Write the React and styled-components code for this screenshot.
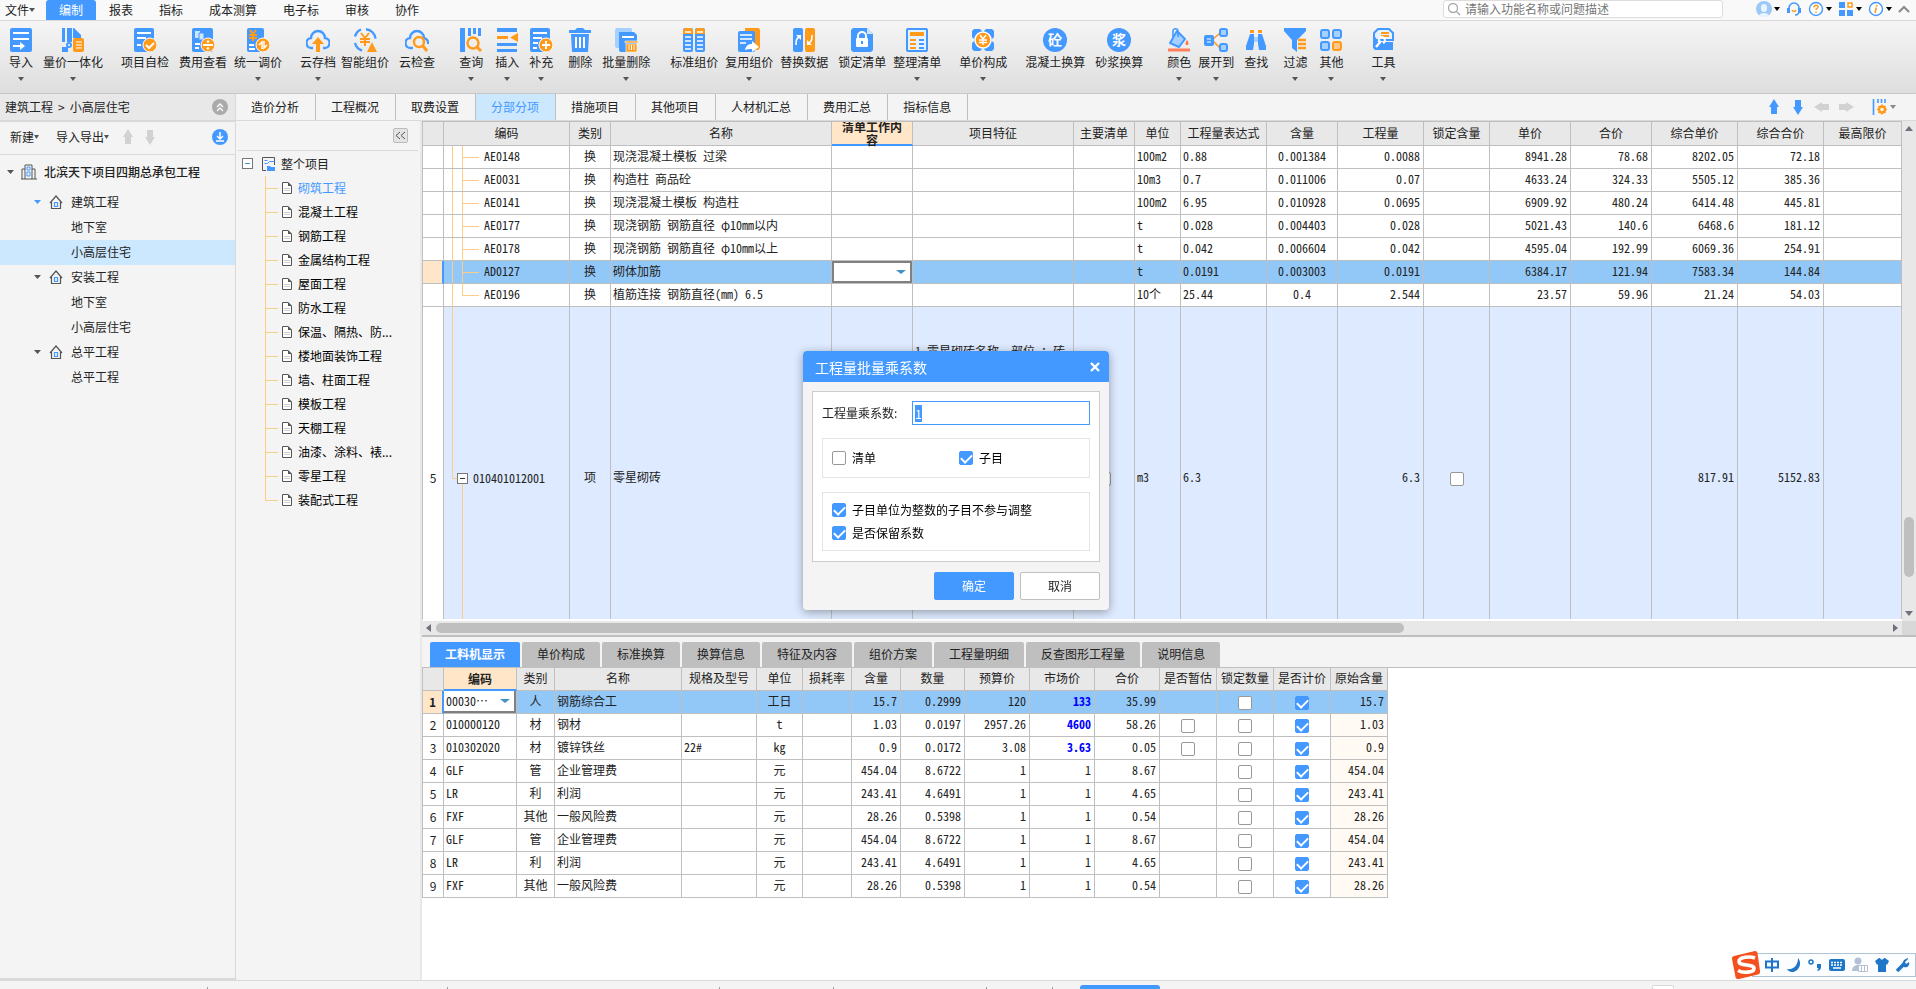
import React, { useEffect, useRef, useState } from "react";
import styled, { createGlobalStyle, css } from "styled-components";

const COLORS = {
  blue: "#4399ff",
  orange: "#ff9a1a",
  grid: "#bfbfbf",
  line: "#d9d9d9",
  panel: "#f4f4f4",
  header: "#e8e8e8",
  selected: "#cce8ff",
  rowSelected: "#92c8f8",
  rowBill: "#ddeaff",
  peach: "#ffe6c8",
  branch: "#ffcc88",
  text: "#222222",
};

const B = COLORS.blue;
const O = COLORS.orange;

/* ---------- toolbar icons, all on a 24 x 24 grid ---------- */

const ICONS = {
  import: (
    <>
      <rect x="1" width="22" height="24" rx="2" fill={B} />
      <path d="M4 5h16M4 11h16" stroke="#fff" strokeWidth="2" />
      <path d="M4 17h7v-3l5 4-5 4v-3H4z" fill="#fff" />
    </>
  ),
  quantity: (
    <>
      <path d="M1 0h3v14H1zM6 0h5v14H6zM1 19h6v5H1z" fill={B} />
      <path d="M12 0h1l7 7v3h-8z" fill={B} />
      <circle cx="8" cy="17" r="2" fill="#fff" stroke={B} strokeWidth="2" />
      <rect x="12" y="10" width="11" height="14" rx="2" fill={O} />
      <path d="M15 14h6M15 17h6M15 20h6" stroke="#fff" strokeWidth="1" />
    </>
  ),
  check: (
    <>
      <rect x="1" width="20" height="24" rx="2" fill={B} />
      <path d="M4 5h14M4 10h9M4 17h4" stroke="#fff" strokeWidth="2" />
      <circle cx="17" cy="17" r="7" fill={O} stroke="#fff" />
      <path d="M13 17l3 3 5-5" stroke="#fff" strokeWidth="2" fill="none" />
    </>
  ),
  fee: (
    <>
      <rect x="1" width="21" height="24" rx="2" fill={B} />
      <path d="M4 3h5v7H4z" fill="#cfe6ff" />
      <path d="M8 5h5v7H8z" fill="#cfe6ff" stroke={B} />
      <path d="M4 16h5M4 20h4" stroke="#fff" strokeWidth="2" />
      <circle cx="17" cy="17" r="7" fill={O} stroke="#fff" />
      <path d="M12 17h10" stroke="#fff" strokeWidth="2" />
      <circle cx="17" cy="13.500" r="1.300" fill="#fff" />
      <circle cx="17" cy="20.500" r="1.300" fill="#fff" />
    </>
  ),
  adjust: (
    <>
      <rect x="1" width="17" height="24" rx="2" fill={B} />
      <path d="M4 2l3 4 3-4M3 7h8M3 10h8M7 6v7" stroke={O} strokeWidth="2" fill="none" />
      <path d="M3 17h5M3 21h6" stroke="#fff" strokeWidth="2" />
      <circle cx="17" cy="17" r="7" fill={O} stroke="#fff" />
      <path d="M13 17l3-3v7M21 17l-3 3v-7" stroke="#fff" fill="none" strokeWidth="1.5" />
    </>
  ),
  cloudUp: (
    <>
      <path d="M7 20H6a5 5 0 0 1-1-10 7 7 0 0 1 14 0 5 5 0 0 1-1 10h-1" fill="none" stroke={B} strokeWidth="2.4" />
      <path d="M12 9l6 7h-4v8h-4v-8H6z" fill={O} />
    </>
  ),
  smart: (
    <>
      <path d="M8 1.500a10.500 10.500 0 0 0-6 7M2 15a10.500 10.500 0 0 0 7 7.500M13 1.200a10.500 10.500 0 0 1 9.500 9.500" fill="none" stroke={B} strokeWidth="2.400" />
      <path d="M8 5l4 5 4-5M7 11h10M7 14h10M12 10v8" stroke={O} strokeWidth="2" fill="none" />
      <path d="M19 14l5 10H14z" fill={O} />
    </>
  ),
  cloudSearch: (
    <>
      <path d="M8 20H6a5 5 0 0 1-1-10 7 7 0 0 1 14 0 5 5 0 0 1 4 6" fill="none" stroke={B} strokeWidth="2.4" />
      <circle cx="14" cy="14" r="5" fill="none" stroke={O} strokeWidth="2.4" />
      <path d="M18 18l4 5" stroke={O} strokeWidth="3" />
    </>
  ),
  query: (
    <>
      <path d="M1 0h5v24H1zM9 0h3v8H9zM14 0h3v6h-3zM19 0h3v8h-3z" fill={B} />
      <circle cx="14" cy="15" r="5.500" fill="none" stroke={O} strokeWidth="2.400" />
      <path d="M18 19l4 4" stroke={O} strokeWidth="3" />
    </>
  ),
  insert: (
    <>
      <path d="M2 0h20v4H2zM2 15h20v3H2zM2 21h20v3H2z" fill={B} />
      <path d="M2 8h11v3H2z" fill={O} />
      <path d="M23 5v9l-8-4.500z" fill={O} />
    </>
  ),
  add: (
    <>
      <rect x="1" width="20" height="24" rx="2" fill={B} />
      <path d="M4 5h14M4 10h9M4 15h5M4 20h4" stroke="#fff" strokeWidth="2" />
      <circle cx="17" cy="17" r="7" fill={O} stroke="#fff" />
      <path d="M13 17h8M17 13v8" stroke="#fff" strokeWidth="2" />
    </>
  ),
  trash: (
    <>
      <path d="M1 2h6l2-2h6l2 2h6v3H1zM3 6h18l-1 18H4z" fill={B} />
      <path d="M8 9v11M12 9v11M16 9v11" stroke="#fff" strokeWidth="2" />
    </>
  ),
  batchTrash: (
    <>
      <rect x="1" width="17" height="20" rx="2" fill="#a6d0ff" />
      <path d="M5 4h15l3 3v17H7a2 2 0 0 1-2-2z" fill={B} />
      <path d="M8 9h12" stroke="#fff" strokeWidth="2" />
      <path d="M11 13h13v2H11zM12 16h11v8H12z" fill={O} stroke="#fff" strokeWidth="0.600" />
      <path d="M15 17v5M17.500 17v5M20 17v5" stroke="#fff" />
    </>
  ),
  standard: (
    <>
      <rect x="1" width="10" height="24" rx="2" fill={B} />
      <rect x="13" width="10" height="24" rx="2" fill={B} />
      <path d="M1 6V2l2-2h6l2 2v4zM13 6V2l2-2h6l2 2v4z" fill={O} />
      <path d="M3 4h6M15 4h6M3 9h6M15 9h6M3 13h6M15 13h6M3 17h6M15 17h6M3 21h6M15 21h6" stroke="#fff" strokeWidth="1.400" />
    </>
  ),
  reuse: (
    <>
      <path d="M8 0h14l1 2v18l-2 2H8z" fill={O} />
      <rect x="1" y="3" width="17" height="21" rx="2" fill={B} />
      <path d="M3 7h12M3 11h12M3 15h6" stroke="#fff" strokeWidth="1.600" />
      <path d="M8 22c1-5 4-6 7-6v-3l7 6-7 5v-3c-3 0-5 0-7 1z" fill="#fff" />
    </>
  ),
  replace: (
    <>
      <rect x="1" width="10" height="24" rx="2" fill={B} />
      <rect x="13" width="10" height="24" rx="2" fill={O} />
      <path d="M4 17c0-4 0-6 3-8" stroke="#fff" strokeWidth="1.600" fill="none" />
      <path d="M4 7h5v5z" fill="#fff" />
      <path d="M20 7c0 4 0 6-3 8" stroke="#fff" strokeWidth="1.600" fill="none" />
      <path d="M20 17h-5v-5z" fill="#fff" />
    </>
  ),
  lock: (
    <>
      <path d="M3 0h14l6 6v16l-2 2H3l-2-2V2z" fill={B} />
      <path d="M17 0v6h6z" fill="#cfe6ff" />
      <rect x="6" y="10" width="12" height="9" rx="1" fill="#fff" />
      <path d="M8 11V8a4 4 0 0 1 8 0v3" fill="none" stroke="#fff" strokeWidth="2" />
      <path d="M12 13v3" stroke={B} strokeWidth="2" />
    </>
  ),
  arrange: (
    <>
      <rect x="2" y="1" width="20" height="22" rx="1" fill="#e5f2ff" stroke={B} strokeWidth="2" />
      <path d="M5 6h14" stroke={O} strokeWidth="4" />
      <path d="M5 12h6M5 16h6M5 20h6" stroke={O} strokeWidth="2" />
      <path d="M14 12h5M14 16h5M14 20h5" stroke={B} strokeWidth="2" />
    </>
  ),
  price: (
    <>
      <path d="M3 1h6l3 3 3-3h6l2 2v6l-3 3 3 3v6l-2 2h-6l-3-3-3 3H3l-2-2v-6l3-3-3-3V3z" fill={B} />
      <circle cx="12" cy="12" r="8" fill={O} stroke="#fff" strokeWidth="1.500" />
      <path d="M9 7l3 4 3-4M8 12h8M8 14.500h8M12 11v6" stroke="#fff" strokeWidth="1.400" fill="none" />
    </>
  ),
  concrete: (
    <>
      <circle cx="12" cy="12" r="12" fill={B} />
      <text x="12" y="17" fontSize="14" fontWeight="700" fill="#fff" textAnchor="middle">砼</text>
    </>
  ),
  mortar: (
    <>
      <circle cx="12" cy="12" r="12" fill={B} />
      <text x="12" y="17" fontSize="14" fontWeight="700" fill="#fff" textAnchor="middle">浆</text>
    </>
  ),
  color: (
    <>
      <path d="M10 3l8 8-6 8-9-4z" fill="#a6d0ff" stroke={B} strokeWidth="2" strokeLinejoin="round" />
      <path d="M6 9V3c0-3 5-3 5 0v6" fill="none" stroke={B} strokeWidth="1.600" />
      <path d="M20 12c2 3 2 5 0 5s-2-2 0-5z" fill="#ff7350" />
      <path d="M1 22h22" stroke="#ff7e5c" strokeWidth="3" />
    </>
  ),
  expand: (
    <>
      <path d="M8 12l8-7M8 12l8 8" stroke={O} strokeWidth="1.500" />
      <rect x="0" y="7" width="10" height="11" rx="2" fill={B} />
      <path d="M3 11h4M3 14h4" stroke="#fff" />
      <rect x="16" y="1" width="7" height="7" rx="2" fill="#a6d0ff" stroke={B} strokeWidth="2" />
      <rect x="16" y="16" width="7" height="7" rx="2" fill="#a6d0ff" stroke={B} strokeWidth="2" />
    </>
  ),
  find: (
    <>
      <path d="M6 2h4v3H6zM14 2h4v3h-4z" fill={O} />
      <path d="M6 6h4v10l-1 6H2v-4zM14 6h4l4 12v4h-7l-1-6z" fill={B} />
      <path d="M10 9h4v5h-4z" fill="#a6d0ff" />
    </>
  ),
  filter: (
    <>
      <path d="M1 0h22v3l-9 9v12l-5-4v-8L1 3z" fill={B} />
      <path d="M15 12h8M15 16h8M15 20h8" stroke={O} strokeWidth="2.400" />
    </>
  ),
  other: (
    <>
      <rect x="2" y="2" width="8" height="8" rx="2" fill="#a6d0ff" stroke={B} strokeWidth="2" />
      <rect x="14" y="2" width="8" height="8" rx="2" fill="#a6d0ff" stroke={B} strokeWidth="2" />
      <rect x="2" y="14" width="8" height="8" rx="2" fill="#a6d0ff" stroke={B} strokeWidth="2" />
      <rect x="14" y="14" width="8" height="8" rx="2" fill="#ffc888" stroke={O} strokeWidth="2" />
    </>
  ),
  tool: (
    <>
      <path d="M7 1h11l4 4v7H3V5z" fill="#e5f2ff" stroke={B} strokeWidth="2" />
      <path d="M10 5h8M10 8h8" stroke={O} strokeWidth="2" />
      <path d="M2 5l5 9h15v8H4l-2-2z" fill={B} />
      <path d="M5 19l5-6" stroke="#fff" strokeWidth="2.400" />
      <path d="M8 13a3 3 0 1 1 4 2" fill="none" stroke="#fff" strokeWidth="2" />
    </>
  ),
};

const Icon = ({ name, size = 24 }) => (
  <svg width={size} height={size} viewBox="0 0 24 24" aria-hidden="true">
    {ICONS[name]}
  </svg>
);

const Caret = ({ color = "#555", width = 6 }) => (
  <svg width={width} height="4" viewBox="0 0 6 4" preserveAspectRatio="none" aria-hidden="true">
    <path d="M0 0h6L3 4z" fill={color} />
  </svg>
);

const Arrow = ({ turn = 0, color = B }) => (
  <svg width="16" height="16" viewBox="0 0 16 16" aria-hidden="true">
    <path d="M8 0l5 8h-2v7H5V8H3z" fill={color} transform={`rotate(${turn} 8 8)`} />
  </svg>
);

/* ---------- data ---------- */

const MENUS = ["报表", "指标", "成本测算", "电子标", "审核", "协作"];

// gap is the space in front of the button
const TOOLS = [
  { label: "导入", icon: "import", gap: 0, more: true },
  { label: "量价一体化", icon: "quantity", gap: 10, more: true },
  { label: "项目自检", icon: "check", gap: 18 },
  { label: "费用查看", icon: "fee", gap: 10 },
  { label: "统一调价", icon: "adjust", gap: 7, more: true },
  { label: "云存档", icon: "cloudUp", gap: 18, more: true },
  { label: "智能组价", icon: "smart", gap: 5 },
  { label: "云检查", icon: "cloudSearch", gap: 10 },
  { label: "查询", icon: "query", gap: 24, more: true },
  { label: "插入", icon: "insert", gap: 12, more: true },
  { label: "补充", icon: "add", gap: 10, more: true },
  { label: "删除", icon: "trash", gap: 15 },
  { label: "批量删除", icon: "batchTrash", gap: 10, more: true },
  { label: "标准组价", icon: "standard", gap: 20 },
  { label: "复用组价", icon: "reuse", gap: 7, more: true },
  { label: "替换数据", icon: "replace", gap: 7 },
  { label: "锁定清单", icon: "lock", gap: 10 },
  { label: "整理清单", icon: "arrange", gap: 7, more: true },
  { label: "单价构成", icon: "price", gap: 18, more: true },
  { label: "混凝土换算", icon: "concrete", gap: 18 },
  { label: "砂浆换算", icon: "mortar", gap: 10 },
  { label: "颜色", icon: "color", gap: 24, more: true },
  { label: "展开到", icon: "expand", gap: 7, more: true },
  { label: "查找", icon: "find", gap: 10 },
  { label: "过滤", icon: "filter", gap: 15, more: true },
  { label: "其他", icon: "other", gap: 12, more: true },
  { label: "工具", icon: "tool", gap: 28, more: true },
];

const PAGES = ["造价分析", "工程概况", "取费设置", "分部分项", "措施项目", "其他项目", "人材机汇总", "费用汇总", "指标信息"];

const PROJECT = [
  { name: "建筑工程", open: true, children: ["地下室", "小高层住宅"], active: 1 },
  { name: "安装工程", children: ["地下室", "小高层住宅"] },
  { name: "总平工程", children: ["总平工程"] },
];

const SECTIONS = [
  "砌筑工程", "混凝土工程", "钢筋工程", "金属结构工程", "屋面工程", "防水工程", "保温、隔热、防...",
  "楼地面装饰工程", "墙、柱面工程", "模板工程", "天棚工程", "油漆、涂料、裱...", "零星工程", "装配式工程",
];

const BILL_COLUMNS = [
  { title: "", width: 21 },
  { title: "编码", width: 126 },
  { title: "类别", width: 41 },
  { title: "名称", width: 221 },
  { title: "清单工作内容", width: 81, current: true },
  { title: "项目特征", width: 161 },
  { title: "主要清单", width: 61 },
  { title: "单位", width: 46 },
  { title: "工程量表达式", width: 86 },
  { title: "含量", width: 71 },
  { title: "工程量", width: 86 },
  { title: "锁定含量", width: 66 },
  { title: "单价", width: 81 },
  { title: "合价", width: 81 },
  { title: "综合单价", width: 86 },
  { title: "综合合价", width: 86 },
  { title: "最高限价" },
];

// code, name, unit, expression, content, quantity, price, total, full price, full total
const BILL_ROWS = [
  ["AE0148", "现浇混凝土模板 过梁", "100m2", "0.88", "0.001384", "0.0088", "8941.28", "78.68", "8202.05", "72.18"],
  ["AE0031", "构造柱 商品砼", "10m3", "0.7", "0.011006", "0.07", "4633.24", "324.33", "5505.12", "385.36"],
  ["AE0141", "现浇混凝土模板 构造柱", "100m2", "6.95", "0.010928", "0.0695", "6909.92", "480.24", "6414.48", "445.81"],
  ["AE0177", "现浇钢筋 钢筋直径 φ10mm以内", "t", "0.028", "0.004403", "0.028", "5021.43", "140.6", "6468.6", "181.12"],
  ["AE0178", "现浇钢筋 钢筋直径 φ10mm以上", "t", "0.042", "0.006604", "0.042", "4595.04", "192.99", "6069.36", "254.91"],
  ["AD0127", "砌体加筋", "t", "0.0191", "0.003003", "0.0191", "6384.17", "121.94", "7583.34", "144.84"],
  ["AE0196", "植筋连接 钢筋直径(mm) 6.5", "10个", "25.44", "0.4", "2.544", "23.57", "59.96", "21.24", "54.03"],
];

const DETAIL_TABS = ["工料机显示", "单价构成", "标准换算", "换算信息", "特征及内容", "组价方案", "工程量明细", "反查图形工程量", "说明信息"];

const DETAIL_COLUMNS = [
  { title: "", width: 21 },
  { title: "编码", width: 73, current: true },
  { title: "类别", width: 38 },
  { title: "名称", width: 127 },
  { title: "规格及型号", width: 75 },
  { title: "单位", width: 46 },
  { title: "损耗率", width: 49 },
  { title: "含量", width: 49 },
  { title: "数量", width: 64 },
  { title: "预算价", width: 65 },
  { title: "市场价", width: 65 },
  { title: "合价", width: 65 },
  { title: "是否暂估", width: 57 },
  { title: "锁定数量", width: 57 },
  { title: "是否计价", width: 57 },
  { title: "原始含量", width: 57 },
];

const DETAIL_ROWS = [
  { code: "00030⋯", kind: "人", name: "钢筋综合工", unit: "工日", content: "15.7", amount: "0.2999", budget: "120", market: "133", total: "35.99", changed: true },
  { code: "010000120", kind: "材", name: "钢材", unit: "t", content: "1.03", amount: "0.0197", budget: "2957.26", market: "4600", total: "58.26", changed: true, estimate: true },
  { code: "010302020", kind: "材", name: "镀锌铁丝", spec: "22#", unit: "kg", content: "0.9", amount: "0.0172", budget: "3.08", market: "3.63", total: "0.05", changed: true, estimate: true },
  { code: "GLF", kind: "管", name: "企业管理费", unit: "元", content: "454.04", amount: "8.6722", budget: "1", market: "1", total: "8.67" },
  { code: "LR", kind: "利", name: "利润", unit: "元", content: "243.41", amount: "4.6491", budget: "1", market: "1", total: "4.65" },
  { code: "FXF", kind: "其他", name: "一般风险费", unit: "元", content: "28.26", amount: "0.5398", budget: "1", market: "1", total: "0.54" },
  { code: "GLF", kind: "管", name: "企业管理费", unit: "元", content: "454.04", amount: "8.6722", budget: "1", market: "1", total: "8.67" },
  { code: "LR", kind: "利", name: "利润", unit: "元", content: "243.41", amount: "4.6491", budget: "1", market: "1", total: "4.65" },
  { code: "FXF", kind: "其他", name: "一般风险费", unit: "元", content: "28.26", amount: "0.5398", budget: "1", market: "1", total: "0.54" },
];

/* ---------- sections ---------- */

const TopBar = () => (
  <MenuBar>
    <FileButton>
      文件
      <Caret />
    </FileButton>
    <MenuButton $active>编制</MenuButton>
    {MENUS.map((menu) => (
      <MenuButton key={menu}>{menu}</MenuButton>
    ))}
    <Spacer />
    <SearchBox>
      <svg width="14" height="14" viewBox="0 0 14 14" aria-hidden="true">
        <circle cx="6" cy="6" r="4.500" fill="none" stroke="#aaa" strokeWidth="1.300" />
        <path d="M9 9l4 4" stroke="#aaa" strokeWidth="1.500" />
      </svg>
      <SearchInput type="search" aria-label="搜索" placeholder="请输入功能名称或问题描述" />
    </SearchBox>
    <Utilities>
      <UtilityButton aria-label="账号">
        <svg width="16" height="16" viewBox="0 0 16 16">
          <circle cx="8" cy="8" r="8" fill="#9cc9f5" />
          <path d="M5 6a3 3 0 0 1 6 0v2a3 3 0 0 1-6 0zM3 15c0-4 10-4 10 0a8 8 0 0 1-10 0z" fill="#e8f4ff" />
        </svg>
        <Caret color="#000" />
      </UtilityButton>
      <UtilityButton aria-label="客服">
        <svg width="16" height="16" viewBox="0 0 16 16">
          <path d="M3 9V7a5 5 0 0 1 10 0v3c0 3-2 4-4 4" fill="none" stroke={B} strokeWidth="1.600" />
          <path d="M1 7h3v5H1zM12 7h3v5h-3z" fill={B} />
          <path d="M6 9c1 2 3 2 4 0" stroke={O} strokeWidth="1.500" fill="none" />
        </svg>
      </UtilityButton>
      <UtilityButton aria-label="帮助">
        <svg width="16" height="16" viewBox="0 0 16 16">
          <circle cx="8" cy="8" r="6.500" fill="#fff" stroke={B} strokeWidth="1.400" />
          <path d="M6 6.500c0-3 4-3 4-.5 0 1.500-2 1.500-2 3M8 10.500V12" fill="none" stroke={O} strokeWidth="1.500" />
        </svg>
        <Caret color="#000" />
      </UtilityButton>
      <UtilityButton aria-label="应用">
        <svg width="16" height="16" viewBox="0 0 16 16">
          <path d="M1 1h6v6H1zM1 9h6v6H1zM9 9h6v6H9z" fill={B} />
          <rect x="10" y="2" width="4" height="4" fill="#fff" stroke={O} strokeWidth="1.500" />
        </svg>
        <Caret color="#000" />
      </UtilityButton>
      <UtilityButton aria-label="关于">
        <svg width="16" height="16" viewBox="0 0 16 16">
          <circle cx="8" cy="8" r="6.500" fill="#fff" stroke={B} strokeWidth="1.400" />
          <path d="M9 4l-.5 1.500M8.300 6.500L7 12" stroke={O} strokeWidth="1.600" />
        </svg>
        <Caret color="#000" />
      </UtilityButton>
      <UtilityButton aria-label="收起功能区">
        <svg width="12" height="8" viewBox="0 0 12 8">
          <path d="M1 7l5-5 5 5" fill="none" stroke="#888" strokeWidth="2" />
        </svg>
      </UtilityButton>
    </Utilities>
  </MenuBar>
);

const ProjectPane = () => (
  <Project>
    <Breadcrumb>
      <Crumbs>
        <span>建筑工程</span>
        <span>&gt;</span>
        <span>小高层住宅</span>
      </Crumbs>
      <IconButton aria-label="收起">
        <svg width="16" height="16" viewBox="0 0 16 16">
          <circle cx="8" cy="8" r="8" fill="#aaa" />
          <path d="M5 8l3-3 3 3M5 12l3-3 3 3" fill="none" stroke="#fff" strokeWidth="1.300" />
        </svg>
      </IconButton>
    </Breadcrumb>
    <ProjectTools>
      <TextButton>
        新建
        <Caret width={5} />
      </TextButton>
      <TextButton>
        导入导出
        <Caret width={5} />
      </TextButton>
      <IconButton aria-label="上移" disabled>
        <Arrow color="#d2d2d2" />
      </IconButton>
      <IconButton aria-label="下移" disabled>
        <Arrow turn={180} color="#d2d2d2" />
      </IconButton>
      <Spacer />
      <IconButton aria-label="下载">
        <svg width="16" height="16" viewBox="0 0 16 16">
          <circle cx="8" cy="8" r="8" fill={B} />
          <path d="M8 3v7M5 7l3 3 3-3M4 12h8" fill="none" stroke="#fff" strokeWidth="1.500" />
        </svg>
      </IconButton>
    </ProjectTools>
    <ProjectTree>
      <RootNode>
        <Caret width={7} />
        <svg width="16" height="16" viewBox="0 0 16 16">
          <path d="M4 15V1h7v14M4 5H1v10M11 5h3v10M0 15h16" fill="none" stroke="#555" />
          <path d="M6 3h3v3H6zM6 8h3v4H6z" fill="none" stroke={B} />
        </svg>
        北滨天下项目四期总承包工程
      </RootNode>
      {PROJECT.map((group) => (
        <li key={group.name}>
          <BranchNode>
            <Caret width={7} color={group.open ? B : "#555"} />
            <svg width="14" height="14" viewBox="0 0 14 14">
              <path d="M1 8l6-7 6 7M2.500 7v6.500h9V7" fill="none" stroke="#555" strokeWidth="1.200" />
              <path d="M5.500 7.500h3v4h-3z" fill="none" stroke={B} strokeWidth="1.200" />
            </svg>
            {group.name}
          </BranchNode>
          <Children>
            {group.children.map((child, index) => (
              <LeafNode key={child} $active={group.active === index}>
                {child}
              </LeafNode>
            ))}
          </Children>
        </li>
      ))}
    </ProjectTree>
  </Project>
);

const SectionPane = () => (
  <Sections>
    <SectionTools>
      <CollapseButton aria-label="折叠">
        <svg width="11" height="9" viewBox="0 0 11 9">
          <path d="M5 1L1 4.500 5 8M10 1L6 4.500 10 8" fill="none" stroke="#555" />
        </svg>
      </CollapseButton>
    </SectionTools>
    <SectionRoot>
      <ToggleBox aria-label="折叠" $color="#4399cc" />
      <svg width="13" height="14" viewBox="0 0 13 14">
        <path d="M12.500 8V.5H.5v13H4" fill="none" stroke="#555" />
        <path d="M2.500 3.500h3M2.500 6.500h3l2-2h5" fill="none" stroke={B} />
        <path d="M5 14V9h3l1 1h4v4z" fill={B} />
      </svg>
      整个项目
    </SectionRoot>
    <SectionList>
      {SECTIONS.map((name, index) => (
        <SectionNode key={name} $active={index === 0} $last={index === SECTIONS.length - 1}>
          <svg width="10" height="12" viewBox="0 0 10 12">
            <path d="M.5.5H6l3.500 3.500v7.500h-9z" fill="#fff" stroke="#555" />
            <path d="M6 0v4h4z" fill="#555" />
            <path d="M2 6.500h6M2 8.500h6" stroke="#ccc" />
          </svg>
          {name}
        </SectionNode>
      ))}
    </SectionList>
  </Sections>
);

const Columns = ({ columns }) => (
  <colgroup>
    {columns.map((column) => (
      <Col key={column.title} $width={column.width} />
    ))}
  </colgroup>
);

const Head = ({ columns, height }) => (
  <thead>
    <tr>
      {columns.map((column) => (
        <HeadCell key={column.title} scope="col" $height={height} $current={column.current}>
          <HeadText $current={column.current}>{column.title}</HeadText>
        </HeadCell>
      ))}
    </tr>
  </thead>
);

const Combo = ({ label, value, thick }) => (
  <ComboBox $thick={thick}>
    <ComboSelect aria-label={label} defaultValue={value}>
      <option>{value}</option>
    </ComboSelect>
    <Caret width={10} color="#4293c4" />
  </ComboBox>
);

const BillTable = () => (
  <BillScroll>
    <BillArea>
      <GridTable $fill>
        <Columns columns={BILL_COLUMNS} />
        <Head columns={BILL_COLUMNS} height={24} />
        <tbody>
          {BILL_ROWS.map((row, index) => {
            const [code, name, unit, expression, content, ...numbers] = row;
            const selected = code === "AD0127";
            return (
              <Row key={code} $selected={selected}>
                <IndexCell $current={selected} />
                <CodeCell $last={index === BILL_ROWS.length - 1}>{code}</CodeCell>
                <Cell $align="center">换</Cell>
                <Cell>{name}</Cell>
                {selected ? (
                  <ControlCell>
                    <Combo label="清单工作内容" value="" thick />
                  </ControlCell>
                ) : (
                  <Cell />
                )}
                <Cell />
                <Cell />
                <Cell>{unit}</Cell>
                <Cell>{expression}</Cell>
                <Cell $align="center">{content}</Cell>
                <Cell $align="right">{numbers[0]}</Cell>
                <Cell />
                {numbers.slice(1).map((value, i) => (
                  <Cell key={i} $align="right">{value}</Cell>
                ))}
                <Cell />
              </Row>
            );
          })}
          <Row $bill>
            <IndexCell>5</IndexCell>
            <BillCodeCell>
              <BillCode>
                <ToggleBox aria-label="折叠" $color="#333" />
                010401012001
              </BillCode>
            </BillCodeCell>
            <Cell $align="center">项</Cell>
            <Cell>零星砌砖</Cell>
            <Cell />
            <FeatureCell>1.零星砌砖名称、部位 ：砖</FeatureCell>
            <ControlCell>
              <Checkbox type="checkbox" aria-label="主要清单" />
            </ControlCell>
            <Cell>m3</Cell>
            <Cell>6.3</Cell>
            <Cell />
            <Cell $align="right">6.3</Cell>
            <ControlCell>
              <Checkbox type="checkbox" aria-label="锁定含量" />
            </ControlCell>
            <Cell />
            <Cell />
            <Cell $align="right">817.91</Cell>
            <Cell $align="right">5152.83</Cell>
            <Cell />
          </Row>
        </tbody>
      </GridTable>
    </BillArea>
    <VerticalBar>
      <svg width="8" height="5" viewBox="0 0 8 5"><path d="M0 5h8L4 0z" fill="#70707c" /></svg>
      <VerticalTrack>
        <VerticalThumb />
      </VerticalTrack>
      <svg width="8" height="5" viewBox="0 0 8 5"><path d="M0 0h8L4 5z" fill="#70707c" /></svg>
    </VerticalBar>
    <HorizontalBar>
      <svg width="5" height="8" viewBox="0 0 5 8"><path d="M5 0v8L0 4z" fill="#70707c" /></svg>
      <HorizontalTrack>
        <HorizontalThumb />
      </HorizontalTrack>
      <svg width="5" height="8" viewBox="0 0 5 8"><path d="M0 0v8l5-4z" fill="#70707c" /></svg>
    </HorizontalBar>
    <Corner />
  </BillScroll>
);

const DetailPane = () => (
  <Detail>
    <DetailTabs role="tablist">
      {DETAIL_TABS.map((tab, index) => (
        <DetailTab key={tab} role="tab" aria-selected={index === 0} $active={index === 0}>
          {tab}
        </DetailTab>
      ))}
    </DetailTabs>
    <GridTable $bordered>
      <Columns columns={DETAIL_COLUMNS} />
      <Head columns={DETAIL_COLUMNS} height={23} />
      <tbody>
        {DETAIL_ROWS.map((row, index) => (
          <Row key={index} $selected={index === 0}>
            <IndexCell $current={index === 0}>{index + 1}</IndexCell>
            {index === 0 ? (
              <ControlCell>
                <Combo label="编码" value={row.code} />
              </ControlCell>
            ) : (
              <Cell>{row.code}</Cell>
            )}
            <Cell $align="center">{row.kind}</Cell>
            <Cell>{row.name}</Cell>
            <Cell>{row.spec}</Cell>
            <Cell $align="center">{row.unit}</Cell>
            <Cell />
            <Cell $align="right">{row.content}</Cell>
            <Cell $align="right">{row.amount}</Cell>
            <Cell $align="right">{row.budget}</Cell>
            <Cell $align="right" $changed={row.changed}>{row.market}</Cell>
            <Cell $align="right">{row.total}</Cell>
            <ControlCell>
              {row.estimate && <Checkbox type="checkbox" aria-label="是否暂估" />}
            </ControlCell>
            <ControlCell>
              <Checkbox type="checkbox" aria-label="锁定数量" />
            </ControlCell>
            <ControlCell>
              <Checkbox type="checkbox" aria-label="是否计价" defaultChecked />
            </ControlCell>
            <Cell $align="right" $tinted={index > 0}>{row.content}</Cell>
          </Row>
        ))}
      </tbody>
    </GridTable>
  </Detail>
);

const FactorDialog = () => {
  const [factor, setFactor] = useState("1");
  const input = useRef(null);

  useEffect(() => {
    input.current.focus();
    input.current.select();
  }, []);

  return (
    <Overlay>
      <Dialog role="dialog" aria-labelledby="factor-title">
        <DialogHeader>
          <DialogTitle id="factor-title">工程量批量乘系数</DialogTitle>
          <IconButton aria-label="关闭">
            <svg width="10" height="10" viewBox="0 0 10 10">
              <path d="M1 1l8 8M9 1L1 9" stroke="#fff" strokeWidth="2.400" />
            </svg>
          </IconButton>
        </DialogHeader>
        <DialogBody>
          <Field>
            <label htmlFor="factor">工程量乘系数:</label>
            <FactorInput
              id="factor"
              ref={input}
              value={factor}
              onChange={(event) => setFactor(event.target.value)}
            />
          </Field>
          <ScopeGroup>
            <Option>
              <Checkbox type="checkbox" />
              清单
            </Option>
            <Option>
              <Checkbox type="checkbox" defaultChecked />
              子目
            </Option>
          </ScopeGroup>
          <RuleGroup>
            <Option>
              <Checkbox type="checkbox" defaultChecked />
              子目单位为整数的子目不参与调整
            </Option>
            <Option>
              <Checkbox type="checkbox" defaultChecked />
              是否保留系数
            </Option>
          </RuleGroup>
        </DialogBody>
        <DialogFooter>
          <DialogButton $primary>确定</DialogButton>
          <DialogButton>取消</DialogButton>
        </DialogFooter>
      </Dialog>
    </Overlay>
  );
};

const InputMethodBar = () => (
  <ImeBar>
    <ImeLogo width="30" height="28" viewBox="0 0 30 28">
      <path d="M3 5L24 0c2 0 2 1 2.500 2L29 20c0 2 0 3-2 3.500L8 28c-2 0-3 0-3.500-2L1 8c0-2 0-2.500 2-3z" fill="#f4511e" />
      <path d="M24 7c-5-2-16-1-16 3.500 0 5 15 2 15 7 0 4-11 5-16 2" fill="none" stroke="#fff" strokeWidth="3.600" />
    </ImeLogo>
    <svg width="16" height="16" viewBox="0 0 16 16">
      <path d="M2 4.500h12v6H2zM8 1v14" fill="none" stroke="#1f76c8" strokeWidth="2" />
    </svg>
    <svg width="14" height="14" viewBox="0 0 14 14">
      <path d="M11 0c5 6 0 14-6 14-2 0-4-1-5-3 7 1 11-4 11-11z" fill="#1f76c8" />
    </svg>
    <svg width="14" height="14" viewBox="0 0 14 14">
      <circle cx="3" cy="4" r="2" fill="none" stroke="#1f76c8" strokeWidth="1.500" />
      <path d="M9 6h4v3c0 2-1 3-3 4l-1-1c1-1 2-1 1-2H9z" fill="#1f76c8" />
    </svg>
    <svg width="16" height="12" viewBox="0 0 16 12">
      <rect width="16" height="12" rx="2" fill="#1f76c8" />
      <path d="M2 3.500h12M2 6h12" stroke="#fff" strokeWidth="1.500" strokeDasharray="2 1" />
      <path d="M4 9h8" stroke="#fff" strokeWidth="1.500" />
    </svg>
    <svg width="16" height="16" viewBox="0 0 16 16">
      <circle cx="6" cy="4" r="3.500" fill="#b4c0d4" />
      <path d="M0 14c0-8 12-8 12 0z" fill="#b4c0d4" />
      <path d="M6.500 8.500h9v6h-9zM9.500 9v5M12.500 9v5" fill="#fff" stroke="#b4c0d4" />
    </svg>
    <svg width="14" height="14" viewBox="0 0 14 14">
      <path d="M4 0h1c1 2 3 2 4 0h1l4 3-2 4-1-1v8H3V6L2 7 0 3z" fill="#1f76c8" />
    </svg>
    <svg width="14" height="14" viewBox="0 0 14 14">
      <path d="M1 13l7-7" stroke="#1f76c8" strokeWidth="3.500" />
      <path d="M12 1L9 4l1 2 3-2c1 4-2 6-5 5-2-1-3-7 4-9z" fill="#1f76c8" />
    </svg>
  </ImeBar>
);

const App = () => (
  <>
    <GlobalStyle />
    <Page>
      <TopBar />
      <Ribbon>
        {TOOLS.map((tool) => (
          <RibbonButton key={tool.label} $gap={tool.gap}>
            <Icon name={tool.icon} />
            {tool.label}
            {tool.more && <Caret />}
          </RibbonButton>
        ))}
      </Ribbon>
      <Body>
        <ProjectPane />
        <Workspace>
          <PageTabs>
            {PAGES.map((page) => (
              <PageTab key={page} $active={page === "分部分项"}>
                {page}
              </PageTab>
            ))}
            <Spacer />
            <PageTools>
              <IconButton aria-label="上移"><Arrow /></IconButton>
              <IconButton aria-label="下移"><Arrow turn={180} /></IconButton>
              <IconButton aria-label="后退" disabled><Arrow turn={270} color="#d2d2d2" /></IconButton>
              <IconButton aria-label="前进" disabled><Arrow turn={90} color="#d2d2d2" /></IconButton>
              <ColumnButton aria-label="列设置">
                <svg width="16" height="16" viewBox="0 0 16 16">
                  <path d="M1.500 0v16M6 0v4M9.500 0v4M13 0v4" stroke={B} strokeWidth="1.600" />
                  <circle cx="10" cy="10.500" r="3" fill="none" stroke={O} strokeWidth="2.400" />
                  <path d="M10 5.500v2M10 13.500v2M5 10.500h2M13 10.500h2M6.500 7l1.500 1.500M12 12.500l1.500 1.500M13.500 7L12 8.500M8 12.500L6.500 14" stroke={O} strokeWidth="1.600" />
                </svg>
                <Caret width={6} color="#888" />
              </ColumnButton>
            </PageTools>
          </PageTabs>
          <Panes>
            <SectionPane />
            <Main>
              <BillTable />
              <DetailPane />
            </Main>
          </Panes>
        </Workspace>
      </Body>
      <StatusBar>
        {[208, 240, 272, 114, 153, 66].map((width) => (
          <StatusSegment key={width} $width={width} />
        ))}
        <StatusBadge />
        <Spacer />
        <StatusField />
      </StatusBar>
    </Page>
    <FactorDialog />
    <InputMethodBar />
  </>
);

export default App;

/* ---------- styles ---------- */

const GlobalStyle = createGlobalStyle`
  * {
    box-sizing: border-box;
  }
  body {
    margin: 0;
    overflow: hidden;
    color: ${COLORS.text};
    font: 12px/16px "Noto Sans CJK SC", "Open Sans", sans-serif;
  }
  button, input, select {
    font: inherit;
    color: inherit;
  }
  button {
    margin: 0;
    padding: 0;
    border: 0;
    background: none;
    white-space: nowrap;
  }
  ul {
    margin: 0;
    padding: 0;
    list-style: none;
  }
  svg {
    display: block;
    flex: none;
  }
`;

const Page = styled.div`
  height: 100vh;
  display: flex;
  flex-direction: column;
`;

const Spacer = styled.div`
  flex: 1;
`;

const IconButton = styled.button`
  display: flex;
  align-items: center;
`;

const MenuBar = styled.nav`
  flex: none;
  height: 21px;
  display: flex;
  align-items: stretch;
  background: #f9f9f9;
  border-bottom: 1px solid ${COLORS.line};
`;

const FileButton = styled.button`
  display: flex;
  align-items: center;
  padding: 0 11px 0 5px;
`;

const MenuButton = styled.button`
  padding: 0 13px;
  ${({ $active }) =>
    $active &&
    css`
      color: #fff;
      background: ${COLORS.blue};
      border-radius: 3px 3px 0 0;
    `}
`;

const SearchBox = styled.div`
  width: 280px;
  height: 18px;
  padding: 0 3px;
  display: flex;
  align-items: center;
  gap: 4px;
  background: #fff;
  border: 1px solid #ddd;
  border-radius: 3px;
`;

const SearchInput = styled.input`
  flex: 1;
  min-width: 0;
  height: 16px;
  padding: 0;
  border: 0;
  outline: 0;
  background: none;
  &::placeholder {
    color: #777;
  }
`;

const Utilities = styled.div`
  display: flex;
  align-items: center;
  gap: 6px;
  padding: 0 6px 2px 33px;
`;

const UtilityButton = styled.button`
  display: flex;
  align-items: center;
  gap: 2px;
`;

const Ribbon = styled.div`
  flex: none;
  height: 73px;
  padding: 7px 9px 0;
  display: flex;
  align-items: flex-start;
  background: linear-gradient(#f5f5f5, #dedede);
  border-bottom: 1px solid #c8c8c8;
`;

const RibbonButton = styled.button`
  display: flex;
  flex-direction: column;
  align-items: center;
  gap: 2px;
  margin-left: ${({ $gap }) => $gap}px;
  & > svg:last-child:not(:first-child) {
    margin-top: 5px;
  }
`;

const Body = styled.div`
  flex: 1;
  min-height: 0;
  display: flex;
`;

const Project = styled.aside`
  flex: none;
  width: 236px;
  background: ${COLORS.panel};
  border-right: 1px solid ${COLORS.line};
  border-bottom: 2px solid ${COLORS.line};
`;

const Breadcrumb = styled.div`
  height: 28px;
  padding: 0 7px 0 5px;
  display: flex;
  align-items: center;
  justify-content: space-between;
  background: ${COLORS.header};
  border-bottom: 2px solid ${COLORS.line};
`;

const Crumbs = styled.div`
  display: flex;
  gap: 5px;
`;

const ProjectTools = styled.div`
  height: 33px;
  padding: 0 7px 2px 10px;
  display: flex;
  align-items: center;
  gap: 6px;
  border-bottom: 1px solid ${COLORS.line};
`;

const TextButton = styled.button`
  display: flex;
  align-items: center;
  margin-right: 11px;
  & + & {
    margin-right: 5px;
  }
`;

const ProjectTree = styled.ul``;

const Node = styled.li`
  height: 25px;
  padding-bottom: 2px;
  display: flex;
  align-items: center;
`;

const RootNode = styled(Node)`
  height: 35px;
  padding-left: 7px;
  gap: 7px;
  font-weight: 500;
`;

const BranchNode = styled.div`
  height: 25px;
  display: flex;
  align-items: center;
  gap: 8px;
  padding: 0 0 2px 34px;
`;

const Children = styled.ul``;

const LeafNode = styled(Node)`
  padding-left: 71px;
  background: ${({ $active }) => ($active ? COLORS.selected : "transparent")};
`;

const Workspace = styled.div`
  flex: 1;
  min-width: 0;
  display: flex;
  flex-direction: column;
`;

const PageTabs = styled.div`
  flex: none;
  height: 27px;
  display: flex;
  background: ${COLORS.panel};
  border-bottom: 1px solid ${COLORS.line};
`;

const PageTab = styled.button`
  padding: 0 16px 0 15px;
  border-right: 1px solid ${COLORS.grid};
  ${({ $active }) =>
    $active &&
    css`
      color: ${COLORS.blue};
      background: ${COLORS.selected};
    `}
`;

const PageTools = styled.div`
  display: flex;
  align-items: center;
  gap: 8px;
  padding-right: 20px;
`;

const ColumnButton = styled(IconButton)`
  gap: 2px;
  margin-left: 10px;
`;

const Panes = styled.div`
  flex: 1;
  min-height: 0;
  display: flex;
`;

const Sections = styled.aside`
  flex: none;
  width: 186px;
  background: ${COLORS.panel};
  border-right: 2px solid ${COLORS.header};
`;

const SectionTools = styled.div`
  height: 30px;
  margin: 0 2px;
  padding: 0 10px 0 0;
  display: flex;
  align-items: center;
  justify-content: flex-end;
  border-bottom: 1px solid ${COLORS.line};
`;

const CollapseButton = styled.button`
  width: 15px;
  height: 15px;
  display: grid;
  place-items: center;
  background: #e4e4e4;
  border: 1px solid #bbb;
  border-radius: 2px;
`;

const ToggleBox = styled.button`
  flex: none;
  width: 11px;
  height: 11px;
  border: 1px solid #777;
  background: linear-gradient(${({ $color }) => $color}, ${({ $color }) => $color}) center / 5px 1px no-repeat #fff;
`;

const SectionRoot = styled.div`
  height: 25px;
  display: flex;
  align-items: center;
  gap: 6px;
  padding-left: 6px;
  & > svg {
    margin-left: 3px;
  }
`;

const SectionList = styled.ul``;

const SectionNode = styled.li`
  height: 24px;
  display: flex;
  align-items: center;
  gap: 6px;
  padding-left: 46px;
  color: ${({ $active }) => ($active ? COLORS.blue : "#000")};
  background-image: linear-gradient(${COLORS.branch}, ${COLORS.branch}),
    linear-gradient(${COLORS.branch}, ${COLORS.branch});
  background-repeat: no-repeat;
  background-position: 29px 0, 29px 50%;
  background-size: 1px ${({ $last }) => ($last ? "50%" : "100%")}, 13px 1px;
`;

const Main = styled.main`
  flex: 1;
  min-width: 0;
  display: flex;
  flex-direction: column;
`;

const BillScroll = styled.section`
  flex: 1;
  min-height: 0;
  display: grid;
  grid-template: minmax(0, 1fr) 14px / minmax(0, 1fr) 14px;
  border-bottom: 2px solid ${COLORS.grid};
`;

const BillArea = styled.div`
  overflow: hidden;
  border-top: 1px solid ${COLORS.grid};
  border-left: 1px solid ${COLORS.grid};
  border-bottom: 2px solid #fff;
`;

const GridTable = styled.table`
  table-layout: fixed;
  border-collapse: separate;
  border-spacing: 0;
  width: ${({ $fill }) => ($fill ? "100%" : "0")};
  font-family: "Noto Sans Mono CJK SC", "Noto Sans CJK SC", monospace;
  ${({ $bordered }) =>
    $bordered &&
    css`
      border-left: 1px solid ${COLORS.grid};
    `}
`;

const Col = styled.col`
  width: ${({ $width }) => ($width ? `${$width}px` : "auto")};
`;

const HeadCell = styled.th`
  height: ${({ $height }) => $height}px;
  padding: 0 0 2px;
  font-weight: 400;
  background: ${COLORS.header};
  border-right: 1px solid ${COLORS.grid};
  border-bottom: 1px solid ${COLORS.grid};
  ${({ $current }) =>
    $current &&
    css`
      padding: 0;
      font-weight: 700;
      background: ${COLORS.peach};
      border-bottom: 2px solid ${COLORS.blue};
    `}
`;

// the current column wraps its title, the two lines may run over the cell's padding
const HeadText = styled.div`
  height: 18px;
  display: flex;
  align-items: center;
  justify-content: center;
  ${({ $current }) =>
    $current &&
    css`
      padding: 0 8px;
      line-height: 13px;
    `}
`;

const Row = styled.tr`
  height: ${({ $bill }) => ($bill ? 343 : 23)}px;
  background: ${({ $bill, $selected }) =>
    $bill ? COLORS.rowBill : $selected ? COLORS.rowSelected : "#fff"};
`;

const Cell = styled.td`
  padding: 0 3px 2px 2px;
  text-align: ${({ $align }) => $align || "left"};
  white-space: nowrap;
  border-right: 1px solid ${COLORS.grid};
  border-bottom: 1px solid ${COLORS.grid};
  ${({ $align }) =>
    $align === "center" &&
    css`
      padding: 0 0 2px;
    `}
  ${({ $changed }) =>
    $changed &&
    css`
      color: #0000ff;
      font-weight: 700;
    `}
  ${({ $tinted }) =>
    $tinted &&
    css`
      background: #fffaf4;
    `}
`;

const ControlCell = styled(Cell)`
  padding: 0;
  text-align: center;
`;

const IndexCell = styled(Cell)`
  padding: 0;
  text-align: center;
  background: #fff;
  font-family: "Noto Sans CJK SC", sans-serif;
  ${({ $current }) =>
    $current &&
    css`
      font-weight: 700;
      background: ${COLORS.peach};
      border-right: 2px solid ${COLORS.blue};
    `}
`;

const CodeCell = styled(Cell)`
  padding-left: 40px;
  background-image: linear-gradient(${COLORS.branch}, ${COLORS.branch}),
    linear-gradient(${COLORS.branch}, ${COLORS.branch}),
    linear-gradient(${COLORS.branch}, ${COLORS.branch});
  background-repeat: no-repeat;
  background-position: 8px 0, 18px 0, 18px 50%;
  background-size: 1px 100%, 1px ${({ $last }) => ($last ? "50%" : "100%")}, 17px 1px;
`;

const BillCodeCell = styled(Cell)`
  padding: 0 0 0 13px;
  background-image: linear-gradient(${COLORS.branch}, ${COLORS.branch}),
    linear-gradient(${COLORS.branch}, ${COLORS.branch}),
    linear-gradient(${COLORS.branch}, ${COLORS.branch});
  background-repeat: no-repeat;
  background-position: 8px 0, 8px 50%, 18px 100%;
  background-size: 1px 50%, 6px 1px, 1px 50%;
`;

const BillCode = styled.div`
  display: flex;
  align-items: center;
  gap: 5px;
`;

const FeatureCell = styled(Cell)`
  vertical-align: top;
  padding-top: 36px;
`;

const ComboBox = styled.div`
  height: 22px;
  display: flex;
  align-items: center;
  padding-right: 4px;
  background: #fff;
  border: solid #808080;
  border-width: ${({ $thick }) => ($thick ? "2px" : "0 2px 2px 0")};
`;

const ComboSelect = styled.select`
  flex: 1;
  min-width: 0;
  height: 18px;
  padding: 0 0 0 2px;
  appearance: none;
  border: 0;
  outline: 0;
  background: none;
`;

const Checkbox = styled.input`
  appearance: none;
  flex: none;
  width: 14px;
  height: 14px;
  margin: 0;
  display: inline-grid;
  place-content: center;
  vertical-align: middle;
  background: #fff;
  border: 1px solid #999;
  border-radius: 2px;
  &:checked {
    background: ${COLORS.blue};
    border-color: ${COLORS.blue};
  }
  &:checked::before {
    content: "";
    width: 5px;
    height: 9px;
    margin-bottom: 2px;
    border: solid #fff;
    border-width: 0 2px 2px 0;
    transform: rotate(45deg);
  }
`;

const VerticalBar = styled.div`
  display: flex;
  flex-direction: column;
  align-items: center;
  padding: 5px 0;
  background: ${COLORS.header};
`;

const VerticalTrack = styled.div`
  flex: 1;
  width: 10px;
  display: flex;
  flex-direction: column;
  justify-content: flex-end;
  padding-bottom: 34px;
`;

const VerticalThumb = styled.div`
  height: 60px;
  background: ${COLORS.grid};
  border-radius: 5px;
`;

const HorizontalBar = styled.div`
  display: flex;
  align-items: center;
  gap: 5px;
  padding: 0 4px;
  background: ${COLORS.header};
`;

const HorizontalTrack = styled.div`
  flex: 1;
`;

const HorizontalThumb = styled.div`
  width: calc(100% * 2 / 3);
  height: 10px;
  background: ${COLORS.grid};
  border-radius: 5px;
`;

const Corner = styled.div`
  background: #d8d8d8;
`;

const Detail = styled.section`
  flex: none;
  height: 343px;
  background: #fff;
`;

const DetailTabs = styled.div`
  height: 31px;
  padding: 5px 8px 0;
  display: flex;
  align-items: flex-start;
  gap: 2px;
  background: ${COLORS.panel};
  border-bottom: 1px solid ${COLORS.grid};
`;

const DetailTab = styled.button`
  height: 25px;
  padding: 0 15px 2px;
  background: ${COLORS.grid};
  border-radius: 2px 2px 0 0;
  ${({ $active }) =>
    $active &&
    css`
      color: #fff;
      font-weight: 700;
      background: ${COLORS.blue};
    `}
`;

const StatusBar = styled.footer`
  flex: none;
  height: 9px;
  display: flex;
  align-items: flex-end;
  background: ${COLORS.panel};
  border-top: 1px solid ${COLORS.line};
`;

const StatusSegment = styled.div`
  width: ${({ $width }) => $width}px;
  height: 2px;
  border-right: 1px solid #999;
`;

const StatusBadge = styled.div`
  width: 80px;
  height: 4px;
  margin-left: 27px;
  background: ${COLORS.blue};
  border-radius: 3px 3px 0 0;
`;

const StatusField = styled.div`
  width: 22px;
  height: 4px;
  margin-right: 242px;
  background: #fff;
  border: 1px solid ${COLORS.line};
  border-bottom: 0;
  border-radius: 2px 2px 0 0;
`;

const Overlay = styled.div`
  position: fixed;
  inset: 0;
  display: grid;
  place-items: center;
  padding: 0 4px 28px 0;
  pointer-events: none;
`;

const Dialog = styled.div`
  width: 306px;
  background: ${COLORS.panel};
  border-radius: 4px;
  box-shadow: 0 2px 10px rgba(0, 0, 0, 0.35);
  overflow: hidden;
  pointer-events: auto;
`;

const DialogHeader = styled.div`
  height: 31px;
  padding: 0 9px 0 12px;
  display: flex;
  align-items: center;
  justify-content: space-between;
  color: #fff;
  background: ${COLORS.blue};
`;

const DialogTitle = styled.h2`
  margin: 0;
  font-size: 14px;
  line-height: 20px;
  font-weight: 400;
`;

const DialogBody = styled.div`
  margin: 9px 9px 10px;
  padding: 9px 9px 10px;
  background: #fff;
  border: 1px solid #ccc;
`;

const Field = styled.div`
  display: flex;
  align-items: center;
  justify-content: space-between;
`;

const FactorInput = styled.input`
  width: 178px;
  height: 24px;
  padding: 0 2px;
  border: 1px solid ${COLORS.blue};
  outline: 0;
  &::selection {
    color: #fff;
    background: ${COLORS.blue};
  }
`;

const OptionGroup = styled.div`
  padding: 0 9px;
  border: 1px solid #e4e4e4;
`;

const ScopeGroup = styled(OptionGroup)`
  height: 40px;
  margin: 13px 0 14px;
  display: grid;
  grid-template-columns: 127px 1fr;
  align-items: center;
`;

const RuleGroup = styled(OptionGroup)`
  padding: 8px 9px;
  display: grid;
  gap: 5px;
`;

const Option = styled.label`
  height: 18px;
  display: flex;
  align-items: center;
  gap: 6px;
  color: #000;
`;

const DialogFooter = styled.div`
  padding: 0 9px 10px;
  display: flex;
  justify-content: flex-end;
  gap: 6px;
`;

const DialogButton = styled.button`
  width: 80px;
  height: 28px;
  color: ${({ $primary }) => ($primary ? "#fff" : COLORS.text)};
  background: ${({ $primary }) => ($primary ? COLORS.blue : "#fff")};
  border: 1px solid ${({ $primary }) => ($primary ? COLORS.blue : COLORS.grid)};
  border-radius: 2px;
`;

const ImeBar = styled.div`
  position: fixed;
  right: 0;
  bottom: 12px;
  height: 24px;
  display: flex;
  align-items: center;
  gap: 7px;
  padding-right: 5px;
  background: #fbfdff;
  border: 1px solid #b0c4d8;
`;

const ImeLogo = styled.svg`
  margin: 0 -4px 0 -22px;
`;
